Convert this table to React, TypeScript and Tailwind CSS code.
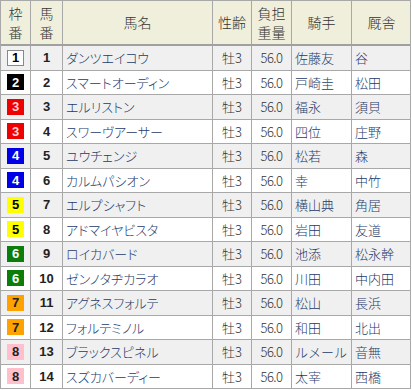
import React from "react";

type Row = { w: number; n: number; name: string; sa: string; kg: string; j: string; t: string };

const rows: Row[] = [
  { w: 1, n: 1, name: "ダンツエイコウ", sa: "牡3", kg: "56.0", j: "佐藤友", t: "谷" },
  { w: 2, n: 2, name: "スマートオーディン", sa: "牡3", kg: "56.0", j: "戸崎圭", t: "松田" },
  { w: 3, n: 3, name: "エルリストン", sa: "牡3", kg: "56.0", j: "福永", t: "須貝" },
  { w: 3, n: 4, name: "スワーヴアーサー", sa: "牡3", kg: "56.0", j: "四位", t: "庄野" },
  { w: 4, n: 5, name: "ユウチェンジ", sa: "牡3", kg: "56.0", j: "松若", t: "森" },
  { w: 4, n: 6, name: "カルムパシオン", sa: "牡3", kg: "56.0", j: "幸", t: "中竹" },
  { w: 5, n: 7, name: "エルプシャフト", sa: "牡3", kg: "56.0", j: "横山典", t: "角居" },
  { w: 5, n: 8, name: "アドマイヤビスタ", sa: "牡3", kg: "56.0", j: "岩田", t: "友道" },
  { w: 6, n: 9, name: "ロイカバード", sa: "牡3", kg: "56.0", j: "池添", t: "松永幹" },
  { w: 6, n: 10, name: "ゼンノタヂカラオ", sa: "牡3", kg: "56.0", j: "川田", t: "中内田" },
  { w: 7, n: 11, name: "アグネスフォルテ", sa: "牡3", kg: "56.0", j: "松山", t: "長浜" },
  { w: 7, n: 12, name: "フォルテミノル", sa: "牡3", kg: "56.0", j: "和田", t: "北出" },
  { w: 8, n: 13, name: "ブラックスピネル", sa: "牡3", kg: "56.0", j: "ルメール", t: "音無" },
  { w: 8, n: 14, name: "スズカバーディー", sa: "牡3", kg: "56.0", j: "太宰", t: "西橋" },
];

const wakuCls: Record<number, string> = {
  1: "bg-white text-black border border-[#888]",
  2: "bg-black text-white",
  3: "bg-[#ee0000] text-[#ffd0d0]",
  4: "bg-[#0000e6] text-white",
  5: "bg-[#ffff00] text-black",
  6: "bg-[#0a7d0a] text-white",
  7: "bg-[#ffa200] text-[#222]",
  8: "bg-[#ffc0cb] text-[#222]",
};

const grid = "grid grid-cols-[30px_32px_150px_39px_40px_60px_59px]";
const jp = "[font-family:'Noto_Sans_CJK_JP','Noto_Sans',sans-serif]";
const cellB = "border-r border-[#a8a8a8]";

export default function App() {
  return (
    <div className={`w-[412px] h-[390px] bg-white overflow-hidden ${jp} font-light`}>
      <div className="w-[411px] border-l border-t border-r border-[#a8a8a8]">
        <div className={`${grid} h-[45px] bg-[#efefdc] border-b-2 border-[#a0a0a0] text-[14px] leading-[19px] text-[#333]`}>
          <div className={`${cellB} flex items-center justify-center text-center`}>枠<br />番</div>
          <div className={`${cellB} flex items-center justify-center text-center`}>馬<br />番</div>
          <div className={`${cellB} flex items-center justify-center`}>馬名</div>
          <div className={`${cellB} flex items-center justify-center`}>性齢</div>
          <div className={`${cellB} flex items-center justify-center text-center`}>負担<br />重量</div>
          <div className={`${cellB} flex items-center justify-center`}>騎手</div>
          <div className="flex items-center justify-center">厩舎</div>
        </div>
        {rows.map((r, i) => (
          <div
            key={r.n}
            className={`${grid} h-[24.5px] border-b border-[#a8a8a8] text-[13px] ${i % 2 === 0 ? "bg-[#f0f0f0]" : "bg-white"}`}
          >
            <div className={`${cellB} flex items-center justify-center`}>
              <span
                className={`w-[17px] h-[16px] flex items-center justify-center text-[13px] font-bold leading-none [font-family:'Liberation_Sans',Arial,sans-serif] ${wakuCls[r.w]}`}
              >
                {r.w}
              </span>
            </div>
            <div className={`${cellB} flex items-center justify-center font-bold text-[13px] text-[#222] [font-family:'Liberation_Sans',Arial,sans-serif]`}>
              {r.n}
            </div>
            <div className={`${cellB} flex items-center pl-[3px] text-[#1e3a6a] [font-feature-settings:'palt'] whitespace-nowrap overflow-hidden`}>
              {r.name}
            </div>
            <div className={`${cellB} flex items-center justify-center text-[#333]`}>{r.sa}</div>
            <div className={`${cellB} flex items-center justify-center text-[#333] tracking-[-0.5px]`}>{r.kg}</div>
            <div className={`${cellB} flex items-center pl-[3px] text-[#1e3a6a] whitespace-nowrap`}>{r.j}</div>
            <div className="flex items-center pl-[3px] text-[#1e3a6a] whitespace-nowrap">{r.t}</div>
          </div>
        ))}
      </div>
    </div>
  );
}
